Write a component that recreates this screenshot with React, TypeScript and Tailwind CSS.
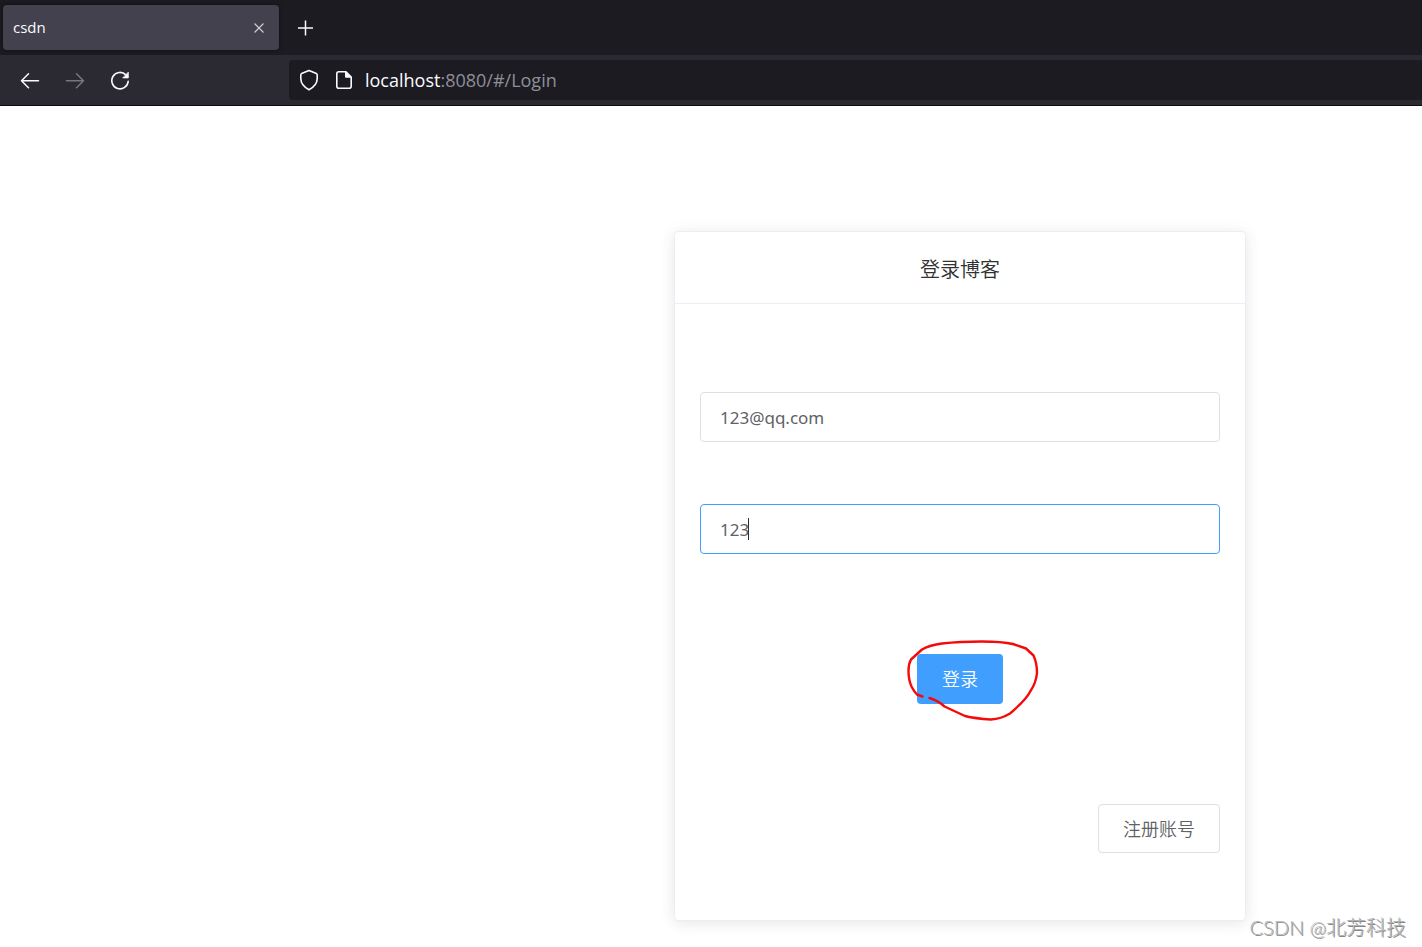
import { useState } from "react";

function BrowserChrome() {
  return (
    <header className="font-['Open_Sans','Noto_Sans',sans-serif] text-[#fbfbfe]">
      <div className="flex h-[55px] items-center bg-[#1c1b22] pl-[3px]">
        <div className="flex h-[45px] w-[276px] items-center justify-between rounded bg-[#42414d] pr-3 pl-[10px] shadow-[0_0_4px_rgba(0,0,0,0.5)]">
          <span className="pb-0.5 text-[15px] leading-5">csdn</span>
          <button type="button" aria-label="Close tab" className="flex size-4 items-center justify-center">
            <svg width="16" height="16" viewBox="0 0 16 16" fill="none" stroke="#d0d0d6" strokeWidth="1.1">
              <path d="M3.5 3.5l9 9M12.5 3.5l-9 9" />
            </svg>
          </button>
        </div>
        <button type="button" aria-label="New tab" className="ml-4 flex size-5 items-center justify-center">
          <svg width="20" height="20" viewBox="0 0 20 20" fill="none" stroke="currentColor" strokeWidth="1.5">
            <path d="M10.5 2.5v15M3 10h15" />
          </svg>
        </button>
      </div>

      <div className="flex h-[51px] items-center border-b border-[#0c0c0d] bg-[#2b2a33] pl-5">
        <nav className="flex w-[269px] gap-[25px]">
          <button type="button" aria-label="Back" className="size-5">
            <svg width="20" height="20" viewBox="0 0 20 20" fill="none" stroke="currentColor" strokeWidth="1.5" strokeLinecap="round" strokeLinejoin="round">
              <path d="M18.5 10.7h-17M8.5 3.7l-7 7 7 7" />
            </svg>
          </button>
          <button type="button" aria-label="Forward" disabled className="size-5 text-[#77767e]">
            <svg width="20" height="20" viewBox="0 0 20 20" fill="none" stroke="currentColor" strokeWidth="1.5" strokeLinecap="round" strokeLinejoin="round">
              <path d="M1.5 10.7h17M11.5 3.7l7 7-7 7" />
            </svg>
          </button>
          <button type="button" aria-label="Reload" className="size-5">
            <svg width="20" height="20" viewBox="0 0 20 20" fill="none" stroke="currentColor" strokeWidth="1.6" strokeLinecap="round">
              <path d="M18.2 11.2a8.2 8.2 0 1 1-2.3-6.3" />
              <path d="M18.3 2.5v5.4h-5.2z" fill="currentColor" strokeWidth="0.8" strokeLinejoin="round" />
            </svg>
          </button>
        </nav>
        <div className="flex h-10 flex-1 items-center rounded-l bg-[#1c1b22] pl-[10px]">
          <svg width="20" height="22" viewBox="0 0 20 22" fill="none" stroke="currentColor" strokeWidth="1.6" strokeLinejoin="round">
            <path d="M10 1.5l7.4 3.1q.8.4.8 1.3v3.6c0 5-3.2 8.6-8.2 11.2C5 18.1 1.8 14.5 1.8 9.5V5.9q0-.9.8-1.3z" />
          </svg>
          <svg className="ml-4" width="18" height="20" viewBox="0 0 18 20" fill="none" stroke="currentColor" strokeWidth="1.6" strokeLinejoin="round">
            <path d="M11 1.8H3.8q-2 0-2 2v12.4q0 2 2 2h10.4q2 0 2-2V7z" />
            <path d="M10.5 1.8V7.2h5.5z" fill="currentColor" strokeWidth="1" />
          </svg>
          <span className="ml-3 text-lg leading-6">
            localhost<span className="text-[#8f8f98]">:8080/#/Login</span>
          </span>
        </div>
      </div>
    </header>
  );
}

const inputClass =
  "block h-[50px] w-full rounded border bg-white px-[19px] text-[17px] text-[#606266] outline-none";

function LoginCard() {
  const [email, setEmail] = useState("123@qq.com");
  const [password, setPassword] = useState("123");

  return (
    <section className="w-[572px] rounded border border-[#ebeef5] bg-white text-[#303133] shadow-[0_2px_15px_rgba(0,0,0,0.1)]">
      <h1 className="border-b border-[#ebeef5] pt-[22px] pb-[18px] text-center text-xl leading-[31px] font-[350]">登录博客</h1>
      <form className="flex flex-col px-[25px] pt-[88px] pb-[67px]" onSubmit={(e) => e.preventDefault()}>
        <input
          type="text"
          aria-label="邮箱"
          value={email}
          onChange={(e) => setEmail(e.target.value)}
          className={`${inputClass} border-[#dcdfe6]`}
        />
        <div className="relative mt-[62px]">
          <input
            type="text"
            aria-label="密码"
            value={password}
            onChange={(e) => setPassword(e.target.value)}
            className={`${inputClass} border-[#409eff]`}
          />
          <span className="absolute top-[14px] left-12 h-[22px] w-px bg-[#303133]" />
        </div>
        <div className="relative mt-[100px] self-center">
          <button type="submit" className="block h-[50px] rounded bg-[#409eff] px-[25px] text-lg font-[350] text-white">
            登录
          </button>
          {/* hand-drawn ring around the submit button */}
          <svg
            className="pointer-events-none absolute -top-4 -left-3 max-w-none"
            width="136"
            height="84"
            viewBox="905 638 136 84"
            fill="none"
            stroke="#f50a0a"
            strokeWidth="2.4"
            strokeLinecap="round"
            strokeLinejoin="round"
          >
            <path d="M922.5 696.5L917 694.5Q914 691.5 911.5 686.5Q908.5 680 908.5 671Q908.5 664 911 659.5L922 649.5Q930 645 942 643.5Q960 641.5 982 641.5Q1002 641.5 1013 644L1026 648.5L1033.5 655.5Q1037 663 1037 673Q1036 683 1030.5 691Q1026 700 1010 713.5Q1001 719 991 719.5Q975 718.5 965 716L944.5 706.5Q938 700.5 929.5 698" />
          </svg>
        </div>
        <button
          type="button"
          className="mt-[100px] h-[49px] self-end rounded border border-[#dcdfe6] bg-white px-6 text-lg font-[350] text-[#606266]"
        >
          注册账号
        </button>
      </form>
    </section>
  );
}

export default function App() {
  return (
    <div className="relative flex min-h-screen flex-col bg-white font-['Noto_Sans','Noto_Sans_CJK_SC',sans-serif]">
      <BrowserChrome />
      <main className="flex justify-end pt-[125px] pr-44">
        <LoginCard />
      </main>
      <footer className="absolute right-4 bottom-1.5 font-['Lato','Noto_Sans_CJK_SC',sans-serif] text-xl leading-7 font-light text-[#b4b4b4] [text-shadow:1px_1px_0_#888]">
        CSDN @北芳科技
      </footer>
    </div>
  );
}
